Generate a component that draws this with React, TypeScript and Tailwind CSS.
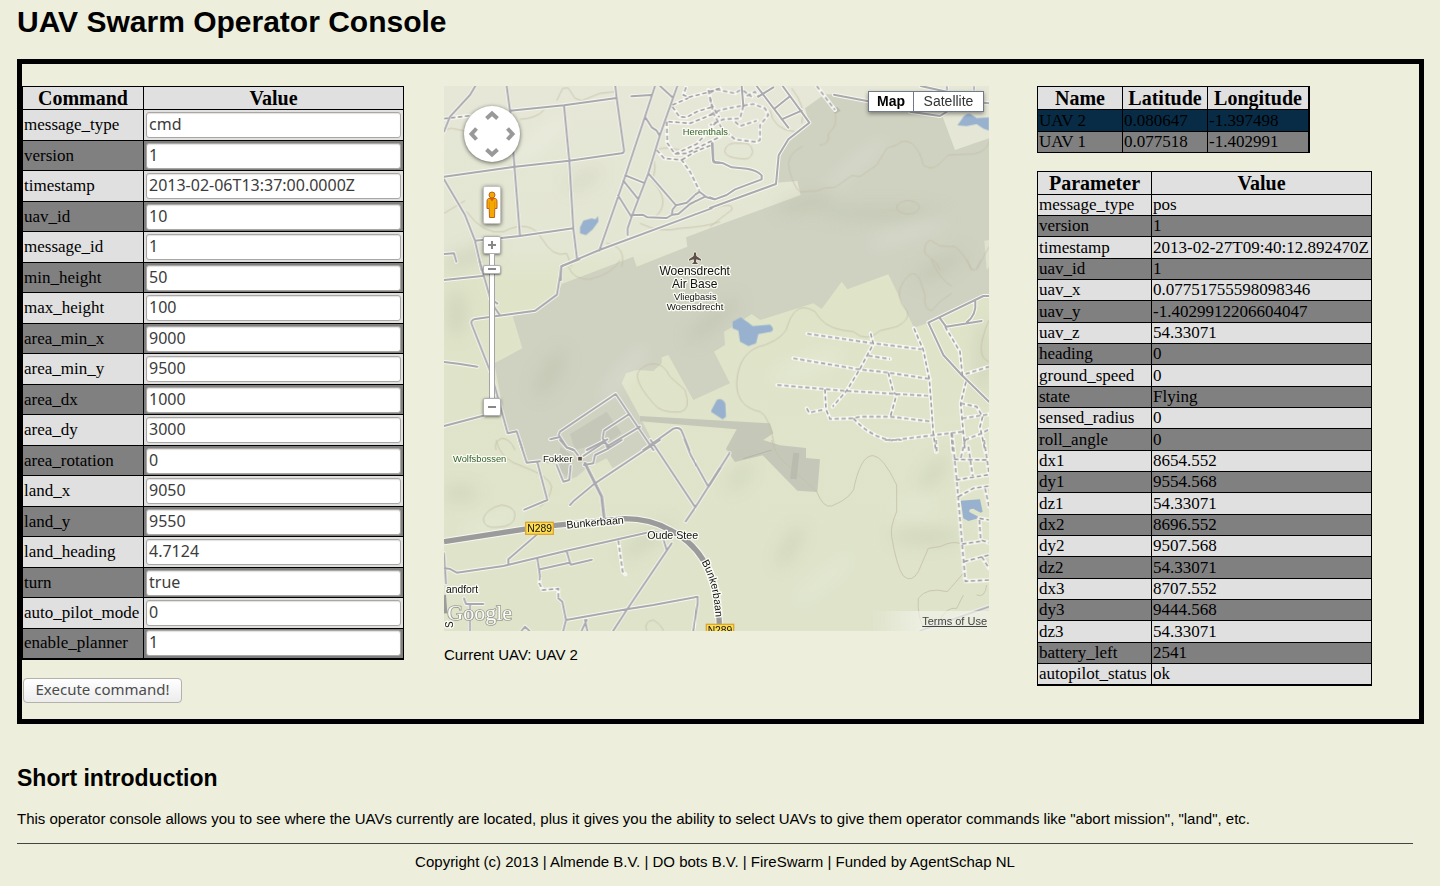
import React, { useState } from "react";

const commands: [string, string][] = [
  ["message_type", "cmd"],
  ["version", "1"],
  ["timestamp", "2013-02-06T13:37:00.0000Z"],
  ["uav_id", "10"],
  ["message_id", "1"],
  ["min_height", "50"],
  ["max_height", "100"],
  ["area_min_x", "9000"],
  ["area_min_y", "9500"],
  ["area_dx", "1000"],
  ["area_dy", "3000"],
  ["area_rotation", "0"],
  ["land_x", "9050"],
  ["land_y", "9550"],
  ["land_heading", "4.7124"],
  ["turn", "true"],
  ["auto_pilot_mode", "0"],
  ["enable_planner", "1"],
];

const uavs = [
  { name: "UAV 2", lat: "0.080647", lon: "-1.397498" },
  { name: "UAV 1", lat: "0.077518", lon: "-1.402991" },
];

const parameters: [string, string][] = [
  ["message_type", "pos"],
  ["version", "1"],
  ["timestamp", "2013-02-27T09:40:12.892470Z"],
  ["uav_id", "1"],
  ["uav_x", "0.07751755598098346"],
  ["uav_y", "-1.4029912206604047"],
  ["uav_z", "54.33071"],
  ["heading", "0"],
  ["ground_speed", "0"],
  ["state", "Flying"],
  ["sensed_radius", "0"],
  ["roll_angle", "0"],
  ["dx1", "8654.552"],
  ["dy1", "9554.568"],
  ["dz1", "54.33071"],
  ["dx2", "8696.552"],
  ["dy2", "9507.568"],
  ["dz2", "54.33071"],
  ["dx3", "8707.552"],
  ["dy3", "9444.568"],
  ["dz3", "54.33071"],
  ["battery_left", "2541"],
  ["autopilot_status", "ok"],
];

type Tile = { at: string; roads: string; tracks: string; contours: string; water: string };

// The map is drawn from six tiles, each with its own origin.
const tiles: Tile[] = [
  {
    at: "translate(0 0)",
    roads:
      "M106 18L90 45L30 110L12 155M200 18L210 92L240 468M210 92L372 76L530 54M526 18L530 54L552 210Q553 218 545 220L388 242L225 260L12 290M372 76L388 242L400 445L411 536M12 298L75 405L105 482L125 570M105 482L240 468L400 445M12 522L42 520L49 545M574 49L634 45M645 18L615 110L556 288L478 512M712 18L690 80L660 165L625 280L575 410L563 445L563 465M660 18L697 52M615 110L635 142L650 152L658 166M556 286L610 308M550 302L595 358M534 346L574 410M625 280L708 376M578 405L608 404L622 412L680 414L695 405L698 388L708 376L740 368L765 345L778 335L800 352L824 358M697 404L715 402L750 372L795 350M363 600L363 560L411 538L478 510L815 385M818 190L820 244Q822 250 840 248",
    tracks:
      "M12 116L90 107M738 22L730 45L745 52L800 38L840 25M697 75L745 54M697 80L718 110L740 112L770 95L820 80M685 125L750 130L800 110L828 98M680 125L682 190L705 222L740 220L800 190L840 170M650 210L672 235L725 240L750 275L778 332M805 30L815 75L838 112M705 222L770 192L830 125M725 240L765 215L815 195",
    contours:
      "M350 62L368 25L385 24L405 55L425 62L480 40L526 35M240 118Q290 115 312 90M12 150L35 145L70 152M12 400L75 362M80 395Q130 465 190 455Q270 415 305 475T380 520L395 560M720 210Q650 190 635 230Q655 260 635 300Q700 370 640 415M600 430Q660 460 720 445Q800 440 840 425M545 560Q560 500 500 490",
    water: "M420 442L430 422L455 415L466 418L474 408L475 425L458 448L438 465L420 460Z",
  },
  {
    at: "translate(810 0)",
    roads:
      "M0 384L198 312L206 226L235 178L298 128L218 18M140 18L235 143M196 84L238 50M215 118L275 92M145 50L190 22M0 352L14 358L50 345L75 328L155 298L155 286Q140 270 110 266L65 262L40 250L14 246L9 240L6 190M95 18L100 78M372 44L475 64M600 95L690 108L712 94M632 18L710 35M820 68L837 70",
    tracks:
      "M0 38L20 28L75 40L90 30M110 48L135 35L145 50M0 55L10 100L38 150M0 105L30 90L90 78L130 72L165 85L175 105L150 135L150 180L140 186L75 178L40 150M100 78L90 115L40 118L0 135M75 125L90 138L140 122M320 18L375 90M100 32L125 50M710 18L712 35M792 18L792 35",
    contours:
      "M180 90Q190 150 255 155M245 25Q290 80 275 130M375 95Q385 140 355 160Q360 195 328 195M278 198Q225 225 238 270Q255 330 272 336L320 333L345 324L375 322L425 287L450 290L500 255L530 205L560 195Q580 175 605 190Q630 210 640 255Q665 275 690 250L715 225L790 222Q830 215 837 185M560 382a34 20 0 1 0 68 0a34 20 0 1 0 -68 0M690 570L680 550L645 520Q640 490 660 480L690 498L735 500Q770 530 785 570M800 570Q815 540 837 500M44 213Q48 185 90 190Q125 185 128 215Q125 242 90 236Q45 232 44 213M0 440Q30 415 65 390Q70 375 50 376Q10 380 0 390",
    water: "M742 136L755 118Q765 100 782 102L800 114L837 112L837 152L820 146L800 132L770 138Z",
  },
  {
    at: "translate(0 540)",
    roads:
      "M12 60L127 48M118 0L155 130L178 163M160 122L172 131M418 -2L365 18L351 104L286 152L105 177Q90 180 96 195L155 345L203 520L230 514L248 570M12 306L55 311L112 320M12 498L130 467M331 538L356 532M400 570L380 562L356 525L360 515L527 402L640 570M568 462L492 512L488 535L505 565M600 500L500 560M440 570L502 538M610 570L700 506Q720 500 726 515L748 570",
    tracks: "",
    contours:
      "M385 20Q400 60 450 58Q520 40 540 0M592 350Q590 325 630 312Q670 305 690 350L735 390Q755 450 720 456Q660 460 640 430Q595 380 592 350M225 570Q210 535 185 535Q160 545 168 570",
    water: "",
  },
  {
    at: "translate(810 540)",
    roads:
      "M837 108L820 108L655 188L700 285L755 345L837 425M796 125Q800 165 770 187M690 175L708 200L815 183",
    tracks:
      "M292 221L490 250L635 268M250 295L440 327L535 338L660 357M202 375L400 392L662 408M612 205L640 270L658 357L662 410L670 520L678 575M482 220L490 252L448 330L410 392L368 440M475 287L540 297M535 338L550 398L560 403L541 470M345 388L348 448L360 477L430 475L450 470L541 470L668 485M290 445L298 458L345 448M430 475Q480 530 545 541L668 526L760 515M724 518L728 575M705 200L750 275L757 345L837 320M768 365L752 430L765 570M752 430L800 440L818 470L810 500L825 570M757 475L837 463M765 540L815 520L837 508",
    contours:
      "M195 570Q180 470 150 455Q80 440 80 370Q85 270 165 255Q230 230 235 190Q260 120 315 155Q340 200 395 210L430 215Q470 250 510 212L560 200Q600 180 592 155Q550 110 580 65Q610 20 630 60L645 105Q640 150 665 152Q690 120 725 100M665 0Q690 60 725 78M772 0Q790 60 812 0M837 180Q790 290 837 305",
    water:
      "M68 185L92 172L115 188L128 198L180 194Q195 205 185 215L145 222L138 250L115 258L90 245L85 212L68 205ZM20 420Q35 412 46 430L48 470L38 478L2 455Z",
  },
  {
    at: "translate(0 1080)",
    roads:
      "M238 0L260 68L300 64M292 66L322 180L253 209M360 0L380 22L402 30L414 46M350 75L370 125L388 120L392 78M390 195L400 184L465 130L660 0M430 48L495 5M432 75L460 70L465 45L500 28L545 0M490 0L508 22M632 0L766 202M737 244L766 202L840 85M734 0L752 45L805 140M12 385L28 386L50 398L190 378L380 332L640 274L665 280L680 330M205 370L205 358L290 284M292 354L300 408M300 388L388 368M380 334L392 374L456 359M355 475L367 485L378 540L370 572M378 540L560 508L640 495L773 470L773 490L760 572M695 310L560 510L520 572M440 540L425 572M435 540L442 572M12 340L18 430M72 475L78 492L130 492M90 492L90 572M245 572L255 560L268 572",
    tracks: "M300 408L298 430L308 450L355 446L355 475M535 302L548 395L556 403",
    contours:
      "M168 0Q180 60 250 80Q330 110 335 140Q330 180 300 200M130 235Q140 205 185 195Q225 200 225 225Q225 260 170 262Q130 265 130 235M620 572Q610 545 640 540Q665 555 670 572",
    water: "",
  },
  {
    at: "translate(810 1080)",
    roads: "M-4 138L58 40M630 572L837 500",
    tracks:
      "M525 0L575 0M678 0L680 35M726 -20L740 120L745 180L756 310L766 424L837 420M765 0L752 55M732 58L837 60M775 20L788 108M738 120L837 104M822 0L837 100M745 170L790 145L837 138M825 145L837 200M808 235L837 240M808 240L812 300L837 308M756 312L812 304M762 365L837 345M815 350L837 385",
    contours:
      "M185 0Q190 45 250 90L320 155Q340 205 365 198Q435 170 435 130Q455 45 490 47Q520 50 560 135V215Q540 260 545 290Q560 380 580 408Q605 430 625 395L655 325L690 320Q730 300 755 312M760 400L712 455Q650 440 625 475Q620 530 645 570M690 540Q710 500 740 505L760 465M800 465Q825 475 830 435",
    water: "M752 182L810 178L818 215L812 218L790 206Q775 206 778 216L805 230L800 236L775 243L760 235Z",
  },
];

function Label({
  x,
  y,
  size,
  children,
  fill = "#111",
  rotate = 0,
}: {
  x: number;
  y: number;
  size: number;
  children: string;
  fill?: string;
  rotate?: number;
}) {
  return (
    <text
      x={x}
      y={y}
      fontSize={size}
      fill={fill}
      stroke="#fbfbf4"
      strokeWidth={8}
      strokeLinejoin="round"
      paintOrder="stroke"
      textAnchor="middle"
      transform={rotate ? `rotate(${rotate} ${x} ${y})` : undefined}
    >
      {children}
    </text>
  );
}

function MapDrawing() {
  return (
    <svg
      viewBox="12 18 1635 1635"
      className="block size-full font-['Liberation_Sans',sans-serif]"
      role="img"
      aria-label="Map of Woensdrecht Air Base"
    >
      <defs>
        <linearGradient id="land" x1="0" y1="0" x2="0" y2="1">
          <stop offset="0" stopColor="#e6e7d7" />
          <stop offset="0.3" stopColor="#e3e6d2" />
          <stop offset="0.36" stopColor="#dfe4c9" />
          <stop offset="1" stopColor="#dee3ca" />
        </linearGradient>
        <linearGradient id="fade" x1="0" x2="1">
          <stop offset="0" stopColor="#f5f5ee" stopOpacity="0" />
          <stop offset="0.4" stopColor="#f5f5ee" stopOpacity="0.6" />
        </linearGradient>
        <filter id="soft" x="-50%" y="-50%" width="200%" height="200%">
          <feGaussianBlur stdDeviation="24" />
        </filter>
      </defs>
      <rect x="12" y="18" width="1635" height="1635" fill="url(#land)" />
      <path
        fill="#cfd2c1"
        d="M218 708L247 805L163 850L203 1060L230 1054L262 1148L340 1150L370 1205L410 1190L440 1165L500 1135L518 1165L560 1138L640 1090L600 1010L545 910L558 880L590 870L640 873L665 850L665 832L685 825L760 960L870 910L822 815L855 795L852 755L878 740L935 702L960 720L1120 670L1145 687L1205 605L1222 628L1345 583L1422 743L1465 728L1630 648H1647V175L1545 210L1507 108L1410 95L1285 64L1182 44L1155 42L1095 85L1108 128L1045 178L1016 226L1010 308L1072 303L1082 345L810 445L738 472L742 500L590 560L580 530L365 612L351 644L286 692Z"
      />
      <path
        fill="#c5c8b8"
        d="M390 1062L500 995L545 1060L500 1090L440 1100L405 1110ZM362 1100L400 1130L380 1190L350 1160ZM600 1008L990 1030L1000 1060L970 1080L1020 1096L1098 1104V1134L1140 1138L1132 1236L1072 1232L968 1126L885 1146L858 1106L890 1048L600 1024Z"
      />
      <path fill="#b9bcae" d="M1060 1118L1078 1120L1070 1198L1050 1196ZM1175 88L1192 80L1202 92L1186 102Z" />
      <path fill="#dfe2cf" d="M1633 482L1647 480V560L1640 570Z" />
      <g filter="url(#soft)">
        <g fill="#a9ae93" opacity="0.24">
          <ellipse cx="50" cy="700" rx="30" ry="70" />
          <ellipse cx="330" cy="880" rx="80" ry="30" transform="rotate(-60 330 880)" />
          <ellipse cx="90" cy="530" rx="90" ry="26" transform="rotate(-20 90 530)" />
          <ellipse cx="430" cy="300" rx="60" ry="18" transform="rotate(-30 430 300)" />
          <ellipse cx="1330" cy="400" rx="190" ry="22" />
          <ellipse cx="1100" cy="370" rx="90" ry="26" transform="rotate(-12 1100 370)" />
          <ellipse cx="900" cy="1190" rx="50" ry="18" transform="rotate(-50 900 1190)" />
          <ellipse cx="1050" cy="1400" rx="70" ry="20" transform="rotate(-60 1050 1400)" />
          <ellipse cx="1460" cy="1370" rx="110" ry="22" />
          <ellipse cx="1630" cy="830" rx="24" ry="110" />
          <ellipse cx="620" cy="1380" rx="90" ry="20" transform="rotate(-35 620 1380)" />
          <ellipse cx="60" cy="1240" rx="50" ry="22" />
          <ellipse cx="1480" cy="1180" rx="60" ry="20" transform="rotate(-50 1480 1180)" />
          <ellipse cx="820" cy="720" rx="100" ry="26" transform="rotate(-40 820 720)" />
          <ellipse cx="1500" cy="560" rx="90" ry="24" transform="rotate(-30 1500 560)" />
        </g>
        <g fill="#ffffff" opacity="0.16">
          <ellipse cx="300" cy="180" rx="120" ry="26" transform="rotate(-40 300 180)" />
          <ellipse cx="550" cy="880" rx="110" ry="24" transform="rotate(-50 550 880)" />
          <ellipse cx="1250" cy="250" rx="120" ry="20" transform="rotate(-40 1250 250)" />
          <ellipse cx="1150" cy="1500" rx="120" ry="26" transform="rotate(-40 1150 1500)" />
          <ellipse cx="150" cy="1330" rx="110" ry="26" transform="rotate(-20 150 1330)" />
          <ellipse cx="1420" cy="1280" rx="80" ry="22" />
          <ellipse cx="1100" cy="860" rx="120" ry="30" transform="rotate(-20 1100 860)" />
          <ellipse cx="1400" cy="460" rx="130" ry="20" transform="rotate(-20 1400 460)" />
        </g>
      </g>
      <g fill="none" stroke="#c5bfa8" strokeWidth={2.4}>
        {tiles.map((t) => (
          <path key={t.at} transform={t.at} d={t.contours} />
        ))}
      </g>
      <g fill="#98b1ce">
        {tiles.map((t) => (
          <path key={t.at} transform={t.at} d={t.water} />
        ))}
      </g>
      <g fill="none" stroke="#f7f7f1" strokeWidth={12} strokeLinejoin="round" strokeLinecap="round">
        {tiles.map((t) => (
          <path key={t.at} transform={t.at} d={t.roads + t.tracks} />
        ))}
        <path d="M12 1385L250 1348L345 1336L555 1316Q630 1316 690 1350Q770 1390 805 1470Q838 1530 838 1653" strokeWidth={22} />
        <path d="M435 1150L485 1250L492 1312" strokeWidth={14} />
      </g>
      <g fill="none" stroke="#aaa9ad" strokeWidth={6} strokeLinejoin="round" strokeLinecap="round">
        {tiles.map((t) => (
          <path key={t.at} transform={t.at} d={t.roads} />
        ))}
        <path d="M435 1150L485 1250L492 1312" strokeWidth={9} />
      </g>
      <g fill="none" stroke="#a5a3a6" strokeWidth={5} strokeDasharray="13 8">
        {tiles.map((t) => (
          <path key={t.at} transform={t.at} d={t.tracks} />
        ))}
      </g>
      <path
        fill="none"
        stroke="#9b9b9b"
        strokeWidth={16}
        d="M12 1385L250 1348L345 1336L555 1316Q630 1316 690 1350Q770 1390 805 1470Q838 1530 838 1653"
      />
      <path fill="none" stroke="#9b9b9b" strokeWidth={12} d="M12 1545L16 1600" />
      <path fill="none" stroke="#b4b5aa" strokeWidth={3} d="M910 1136L995 1110" />

      <path
        fill="#5e5048"
        stroke="#f3f3ea"
        strokeWidth={4}
        paintOrder="stroke"
        d="M765 515Q769 518 769 528L783 538V542L769 538L768 546L773 550V552H757V550L762 546L761 538L747 542V538L761 528Q761 518 765 515Z"
      />
      <rect x="413" y="1129" width="14" height="14" fill="#5e5048" stroke="#f3f3ea" strokeWidth={3} />
      <Label x={764} y={586} size={36}>Woensdrecht</Label>
      <Label x={764} y={625} size={36}>Air Base</Label>
      <Label x={766} y={659} size={28}>Vliegbasis</Label>
      <Label x={765} y={690} size={29}>Woensdrecht</Label>
      <Label x={796} y={166} size={28} fill="#33612b">Herenthals</Label>
      <Label x={119} y={1147} size={28} fill="#33612b">Wolfsbossen</Label>
      <Label x={353} y={1146} size={29}>Fokker</Label>
      <Label x={698} y={1378} size={32}>Oude Stee</Label>
      <Label x={466} y={1338} size={32} rotate={-5}>Bunkerbaan</Label>
      <Label x={66} y={1538} size={31}>andfort</Label>
      <text fontSize={32} fill="#111" stroke="#fbfbf4" strokeWidth={8} paintOrder="stroke">
        <textPath href="#bend">Bunkerbaan</textPath>
      </text>
      <path id="bend" fill="none" d="M784 1446Q834 1530 826 1680" />
      <text fontSize={30} fill="#111" stroke="#fbfbf4" strokeWidth={8} paintOrder="stroke" transform="translate(38 1644) rotate(-90)">
        S
      </text>
      <rect x="257" y="1327" width="83" height="36" fill="#fddc4e" stroke="#dba63a" strokeWidth={4} />
      <text x="299" y="1356" fontSize={31} textAnchor="middle" fill="#111">N289</text>
      <rect x="799" y="1633" width="82" height="36" fill="#fddc4e" stroke="#dba63a" strokeWidth={4} />
      <text x="840" y="1662" fontSize={31} textAnchor="middle" fill="#111">N289</text>
      <text
        x="22"
        y="1620"
        fontSize={66}
        fill="#fbfbf8"
        stroke="#9a9c8f"
        strokeWidth={5}
        paintOrder="stroke"
        className="font-['Liberation_Serif',serif]"
      >
        Google
      </text>
      <rect x="1290" y="1593" width="357" height="60" fill="url(#fade)" />
    </svg>
  );
}

const panArrows = [
  { name: "Pan up", turn: "rotate(0 28 28)" },
  { name: "Pan right", turn: "rotate(90 28 28)" },
  { name: "Pan down", turn: "rotate(180 28 28)" },
  { name: "Pan left", turn: "rotate(270 28 28)" },
];

const zoomButton =
  "flex h-[18px] w-[18px] items-center justify-center rounded-xs border border-[#b0b0b0] bg-white shadow-[0_1px_3px_rgba(0,0,0,0.5)]";

function MapControls() {
  return (
    <div className="absolute top-5 left-5 flex w-14 flex-col items-center">
      <button
        type="button"
        aria-label="Pan the map"
        className="size-14 rounded-full bg-white shadow-[0_1px_4px_rgba(0,0,0,0.6)]"
      >
        <svg viewBox="0 0 56 56" className="size-14">
          {panArrows.map((a) => (
            <path
              key={a.name}
              transform={a.turn}
              d="M22.5 12.5L28 7.5L33.5 12.5"
              fill="none"
              stroke="#999"
              strokeWidth={4}
            />
          ))}
        </svg>
      </button>
      <button
        type="button"
        aria-label="Street View"
        className="mt-6 flex h-[38px] w-[18px] items-center justify-center rounded-xs border border-[#c4c4c4] bg-white shadow-[0_1px_4px_rgba(0,0,0,0.6)]"
      >
        <svg viewBox="0 0 12 28" className="h-7 w-3 shrink-0">
          <path
            d="M2.500 7.500Q1 8 1 10V17.500H3.200L3.500 26.500H8.500L8.800 17.500H11V10Q11 8 9.500 7.500Z"
            fill="#f5a800"
            stroke="#b8651b"
          />
          <path d="M3.500 11V17M8.500 11V17" stroke="#d88a10" strokeWidth={0.7} />
          <circle cx="6" cy="4" r="3" fill="#f5a800" stroke="#b8651b" />
          <path d="M3.500 7L6 10.500L8.500 7Z" fill="#d5601c" />
        </svg>
      </button>
      <button type="button" aria-label="Zoom in" className={`mt-3 ${zoomButton}`}>
        <svg viewBox="0 0 10 10" className="size-[10px] shrink-0">
          <path d="M5 1V9M1 5H9" stroke="#888" strokeWidth={2} />
        </svg>
      </button>
      <input
        type="range"
        aria-label="Zoom level"
        min={0}
        max={100}
        defaultValue={92}
        className="h-36 w-[18px] appearance-none bg-[linear-gradient(to_right,transparent_6px,#a5a5a5_6px,#a5a5a5_7px,#fff_7px,#fff_11px,#a5a5a5_11px,#a5a5a5_12px,transparent_12px)] [direction:rtl] [writing-mode:vertical-lr] [&::-webkit-slider-thumb]:h-[9px] [&::-webkit-slider-thumb]:w-[18px] [&::-webkit-slider-thumb]:appearance-none [&::-webkit-slider-thumb]:rounded-xs [&::-webkit-slider-thumb]:border [&::-webkit-slider-thumb]:border-[#b0b0b0] [&::-webkit-slider-thumb]:bg-[linear-gradient(#888,#888)] [&::-webkit-slider-thumb]:bg-[length:8px_2px] [&::-webkit-slider-thumb]:bg-center [&::-webkit-slider-thumb]:bg-no-repeat [&::-webkit-slider-thumb]:bg-white [&::-webkit-slider-thumb]:shadow-[0_1px_2px_rgba(0,0,0,0.5)]"
      />
      <button type="button" aria-label="Zoom out" className={zoomButton}>
        <svg viewBox="0 0 10 10" className="size-[10px] shrink-0">
          <path d="M1 5H9" stroke="#888" strokeWidth={2} />
        </svg>
      </button>
    </div>
  );
}

const table = "table-fixed border-collapse font-['Liberation_Serif',serif] text-[17px] leading-5";
const heading = "h-[23px] border border-black bg-[#e0e0e0] p-0 text-center text-xl leading-5 font-bold";
const cell = "border border-black px-px py-0 whitespace-nowrap";

export default function App() {
  const [selected, setSelected] = useState("UAV 2");

  return (
    <div className="min-h-screen bg-[#edeedc] pr-4 pl-[17px] font-['Liberation_Sans',sans-serif] text-[15px] leading-[18px] text-black">
      <h1 className="pt-1 text-[30px] leading-9 font-bold">UAV Swarm Operator Console</h1>

      <main className="mt-[19px] flex items-start border-[5px] border-black pt-[22px] pb-4">
        <form className="mr-10 shrink-0" onSubmit={(e) => e.preventDefault()}>
          <table className={`w-[382px] border-b-2 border-black ${table}`}>
            <thead>
              <tr>
                <th className={`w-[121px] ${heading}`}>Command</th>
                <th className={heading}>Value</th>
              </tr>
            </thead>
            <tbody>
              {commands.map(([name, value]) => (
                <tr key={name} className="h-[31px] odd:bg-[#e0e0e0] even:h-[30px] even:bg-[#808080]">
                  <td className={cell}>
                    <label htmlFor={name}>{name}</label>
                  </td>
                  <td className="border border-black px-0.5 py-0">
                    <input
                      id={name}
                      defaultValue={value}
                      className="block h-[26px] w-full rounded-[3px] border border-[#aaa6a2] bg-white px-0.5 pb-0.5 font-['Noto_Sans',sans-serif] text-base leading-6 text-[#3c3c3c] shadow-[inset_0_1px_1px_#e4e2e0]"
                    />
                  </td>
                </tr>
              ))}
            </tbody>
          </table>
          <button
            type="submit"
            className="mt-[18px] ml-px h-[25px] w-[159px] rounded-sm border border-[#b4b0ac] bg-linear-to-b from-white to-[#ececec] pb-0.5 font-['Noto_Sans',sans-serif] text-[15px] leading-5 text-[#4c4c4c]"
          >
            Execute command!
          </button>
        </form>

        <section className="mr-12 w-[545px] shrink-0">
          <div className="relative aspect-square w-full overflow-hidden">
            <MapDrawing />
            <MapControls />
            <div className="absolute top-[5px] right-[5px] flex h-[21px] border border-[#717b87] bg-white text-sm leading-[19px] shadow-[0_2px_4px_rgba(0,0,0,0.4)]">
              <button type="button" className="w-[45px] border-r border-[#717b87] font-bold">
                Map
              </button>
              <button type="button" className="w-[69px] text-[#333]">
                Satellite
              </button>
            </div>
            <a href="#terms" className="absolute right-0.5 bottom-0.5 text-[11px] leading-4 text-[#444] underline">
              Terms of Use
            </a>
          </div>
          <p className="mt-[15px]">Current UAV: {selected}</p>
        </section>

        <section className="shrink-0">
          <table className={`w-[273px] border-r-2 border-black ${table}`}>
            <thead>
              <tr>
                <th className={`w-[85px] ${heading}`}>Name</th>
                <th className={`w-[85px] ${heading}`}>Latitude</th>
                <th className={heading}>Longitude</th>
              </tr>
            </thead>
            <tbody>
              {uavs.map((u) => (
                <tr
                  key={u.name}
                  onClick={() => setSelected(u.name)}
                  className={
                    u.name === selected
                      ? "h-[22px] cursor-pointer bg-[#082c46] last:h-[21px]"
                      : "h-[22px] cursor-pointer bg-[#808080] last:h-[21px]"
                  }
                >
                  <td className={cell}>{u.name}</td>
                  <td className={cell}>{u.lat}</td>
                  <td className={cell}>{u.lon}</td>
                </tr>
              ))}
            </tbody>
          </table>

          <table className={`mt-[18px] w-[335px] border-b-2 border-black ${table}`}>
            <thead>
              <tr>
                <th className={`w-[114px] ${heading}`}>Parameter</th>
                <th className={heading}>Value</th>
              </tr>
            </thead>
            <tbody>
              {parameters.map(([name, value]) => (
                <tr key={name} className="h-[21px] odd:bg-[#e0e0e0] even:bg-[#808080] nth-[3n]:h-[22px]">
                  <td className={cell}>{name}</td>
                  <td className={cell}>{value}</td>
                </tr>
              ))}
            </tbody>
          </table>
        </section>
      </main>

      <h2 className="mt-10 text-[23px] leading-7 font-bold">Short introduction</h2>
      <p className="mt-[18px]">
        This operator console allows you to see where the UAVs currently are located, plus it gives you the ability to
        select UAVs to give them operator commands like "abort mission", "land", etc.
      </p>
      <footer className="mt-[15px] mr-[11px] border-t border-[#444] pt-[9px] text-center">
        Copyright (c) 2013 | Almende B.V. | DO bots B.V. | FireSwarm | Funded by AgentSchap NL
      </footer>
    </div>
  );
}
